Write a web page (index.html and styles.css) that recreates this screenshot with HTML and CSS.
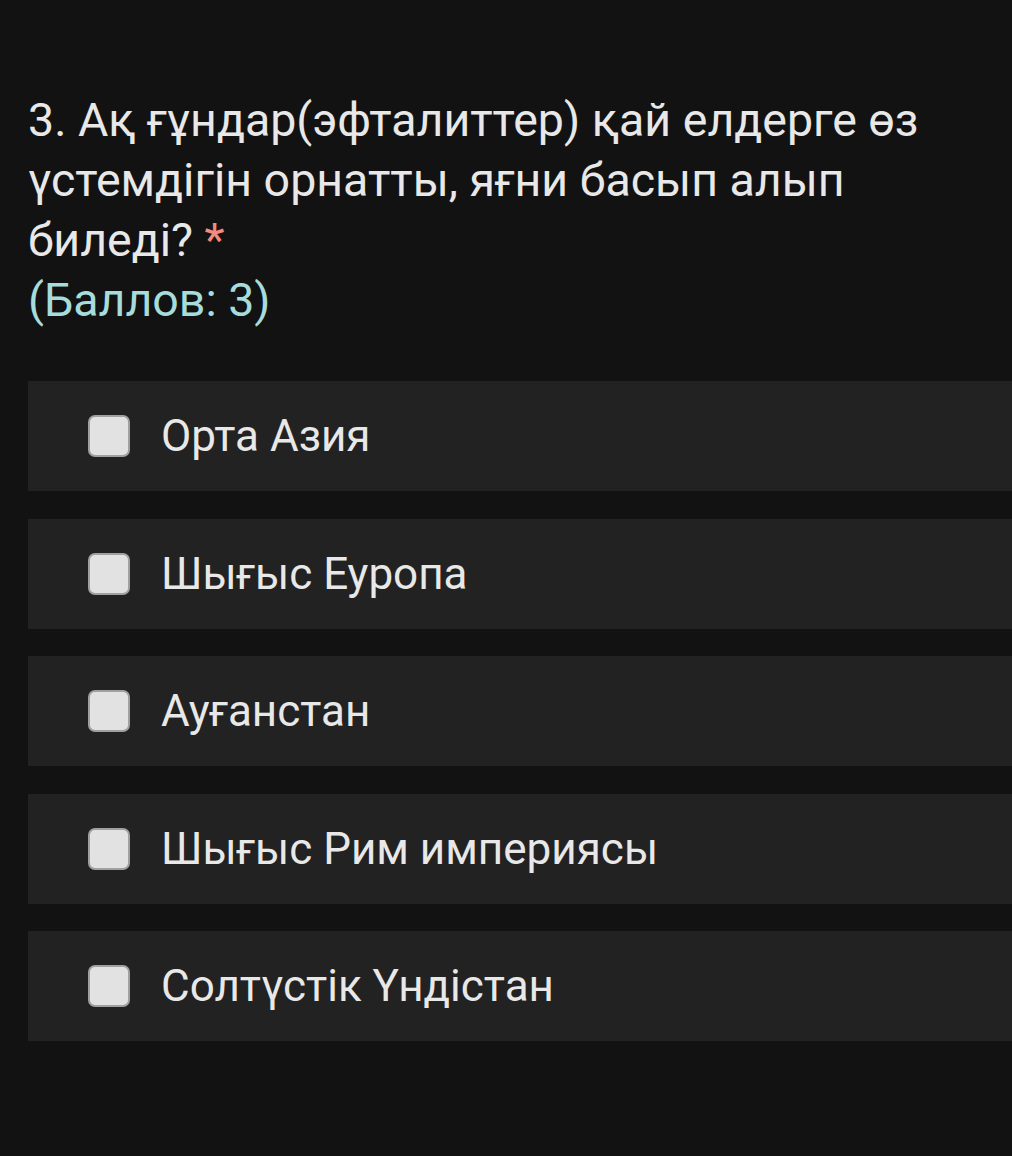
FILE: index.html
```html
<!DOCTYPE html>
<html lang="kk">
<head>
<meta charset="utf-8">
<link rel="stylesheet" href="styles.css">
</head>
<body>
<main class="question">
  <h1 class="title">3. Ақ ғұндар(эфталиттер) қай елдерге өз үстемдігін орнатты, яғни басып алып биледі? <span class="req">*</span></h1>
  <div class="points">(Баллов: 3)</div>
  <ul class="options">
    <li class="option"><span class="box"></span><span class="label">Орта Азия</span></li>
    <li class="option"><span class="box"></span><span class="label">Шығыс Еуропа</span></li>
    <li class="option"><span class="box"></span><span class="label">Ауғанстан</span></li>
    <li class="option"><span class="box"></span><span class="label">Шығыс Рим империясы</span></li>
    <li class="option"><span class="box"></span><span class="label">Солтүстік Үндістан</span></li>
  </ul>
</main>
</body>
</html>
```
FILE: styles.css
```css
html, body {
  margin: 0;
  padding: 0;
  background: #121212;
}
body {
  font-family: Roboto, "Noto Sans", sans-serif;
  color: #e6e6e6;
  width: 1012px;
  height: 1156px;
  overflow: hidden;
}
.question {
  padding: 90px 0 0 28px;
}
.title {
  margin: 0;
  font-size: 46.5px;
  font-weight: 400;
  line-height: 60px;
  width: 960px;
  color: #e8e8e8;
}
.req {
  color: #f28b7e;
}
.points {
  font-size: 46.5px;
  line-height: 60px;
  color: #a6dcdc;
}
.options {
  list-style: none;
  margin: 51px 0 0 0;
  padding: 0;
  display: flex;
  flex-direction: column;
  gap: 27.5px;
}
.option {
  background: #222222;
  height: 110px;
  display: flex;
  align-items: center;
  padding-left: 60px;
}
.box {
  width: 38px;
  height: 38px;
  border: 2px solid #a0a0a0;
  border-radius: 7px;
  background: #e2e2e2;
  flex: none;
}
.label {
  margin-left: 31px;
  font-size: 44px;
  color: #e8e8e8;
}
```
